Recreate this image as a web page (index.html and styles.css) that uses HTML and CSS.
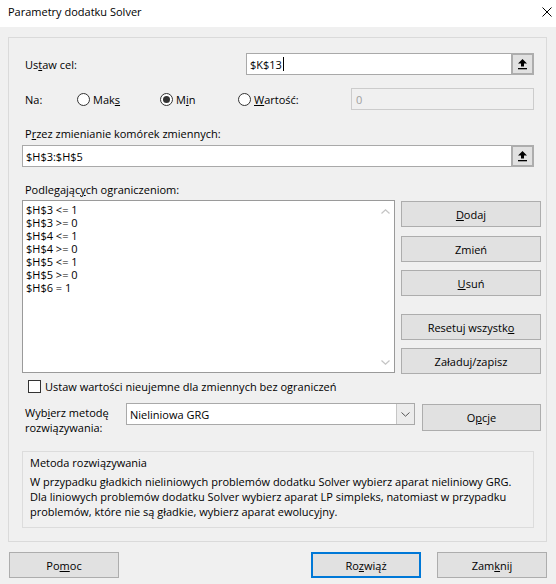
FILE: index.html
```html
<!DOCTYPE html>
<html lang="pl">
<head>
<meta charset="utf-8">
<title>Parametry dodatku Solver</title>
<link rel="stylesheet" href="styles.css">
</head>
<body>
<div class="titlebar">
  <span class="title">Parametry dodatku Solver</span>
  <svg class="close" viewBox="0 0 10 10" width="10" height="10"><path d="M0.5 0.5 L9.5 9.5 M9.5 0.5 L0.5 9.5" stroke="#000" stroke-width="1" fill="none"/></svg>
</div>
<div class="client">
  <div class="panel">
    <div class="row row-target">
      <span class="lbl">Us<u>t</u>aw cel:</span>
      <div class="input target">
        <span class="val">$K$13</span><span class="caret"></span>
        <span class="rbtn"><svg viewBox="0 0 11 12" width="11" height="12"><path d="M5.5 1 L10 5.5 L7 5.5 L7 8.5 L4 8.5 L4 5.5 L1 5.5 Z" fill="#000"/><rect x="1" y="10" width="9" height="1.3" fill="#000"/></svg></span>
      </div>
    </div>
    <div class="row row-to">
      <span class="lbl na">Na:</span>
      <span class="radio r1"><span class="circle"></span>Mak<u>s</u></span>
      <span class="radio r2"><span class="circle on"></span>M<u>i</u>n</span>
      <span class="radio r3"><span class="circle"></span><u>W</u>artość:</span>
      <div class="input value">0</div>
    </div>
    <div class="lbl sect">P<u>r</u>zez zmienianie komórek zmiennych:</div>
    <div class="input changing">
      <span class="val">$H$3:$H$5</span>
      <span class="rbtn"><svg viewBox="0 0 11 12" width="11" height="12"><path d="M5.5 1 L10 5.5 L7 5.5 L7 8.5 L4 8.5 L4 5.5 L1 5.5 Z" fill="#000"/><rect x="1" y="10" width="9" height="1.3" fill="#000"/></svg></span>
    </div>
    <div class="lbl sect2">Podlegając<u>y</u>ch ograniczeniom:</div>
    <div class="constraints">
      <div class="listbox">
        <div class="items">
          <div>$H$3 &lt;= 1</div>
          <div>$H$3 &gt;= 0</div>
          <div>$H$4 &lt;= 1</div>
          <div>$H$4 &gt;= 0</div>
          <div>$H$5 &lt;= 1</div>
          <div>$H$5 &gt;= 0</div>
          <div>$H$6 = 1</div>
        </div>
        <div class="scroll">
          <svg viewBox="0 0 9 5" width="9" height="5"><path d="M0.5 4.5 L4.5 0.8 L8.5 4.5" stroke="#c4c4c4" stroke-width="1.2" fill="none"/></svg>
          <svg viewBox="0 0 9 5" width="9" height="5"><path d="M0.5 0.5 L4.5 4.2 L8.5 0.5" stroke="#c4c4c4" stroke-width="1.2" fill="none"/></svg>
        </div>
      </div>
      <div class="btncol">
        <div class="btn b-add"><span><u>D</u>odaj</span></div>
        <div class="btn b-chg"><span>Zmień</span></div>
        <div class="btn b-del"><span><u>U</u>suń</span></div>
        <div class="btn b-reset"><span>Resetuj wszystk<u>o</u></span></div>
        <div class="btn b-load"><span>Załaduj/zapisz</span></div>
      </div>
    </div>
    <div class="check"><span class="box"></span><span>Ustaw wartości nieujemne dla zmiennych bez o<u>g</u>raniczeń</span></div>
    <div class="method-row">
      <span class="lbl mlabel">Wyb<u>i</u>erz metodę rozwiązywania:</span>
      <div class="select">
        <span class="sel-text">Nieliniowa GRG</span>
        <span class="sel-arrow"><svg viewBox="0 0 9 5" width="9" height="5"><path d="M0.5 0.5 L4.5 4.2 L8.5 0.5" stroke="#555" stroke-width="1" fill="none"/></svg></span>
      </div>
      <div class="btn b-opt"><span>O<u>p</u>cje</span></div>
    </div>
    <div class="group">
      <div class="gtitle">Metoda rozwiązywania</div>
      <p class="gtext">W przypadku gładkich nieliniowych problemów dodatku Solver wybierz aparat nieliniowy GRG. Dla liniowych problemów dodatku Solver wybierz aparat LP simpleks, natomiast w przypadku problemów, które nie są gładkie, wybierz aparat ewolucyjny.</p>
    </div>
  </div>
  <div class="footer">
    <div class="btn f-help"><span>Po<u>m</u>oc</span></div>
    <div class="btn f-solve"><span>Ro<u>z</u>wiąż</span></div>
    <div class="btn f-close"><span>Zam<u>k</u>nij</span></div>
  </div>
</div>
</body>
</html>
```

FILE: styles.css
```css
* { box-sizing: border-box; margin: 0; padding: 0; }
html, body { width: 556px; height: 584px; overflow: hidden; }
body {
  background: #f0f0f0;
  font-family: "Open Sans", "Noto Sans", sans-serif;
  font-size: 11px;
  line-height: 15px;
  color: #000;
}
u { text-decoration: underline; text-underline-offset: 1px; }

.titlebar {
  height: 27px;
  background: #fff;
  display: flex;
  justify-content: space-between;
  align-items: flex-start;
  padding: 4px 0 0 8px;
  font-size: 11px;
  line-height: 16px;
}
.close { margin: 3px 4px 0 0; }

.client { padding: 10px 0 0 8px; }
.panel {
  width: 539px;
  height: 505px;
  border: 1px solid #dadada;
  padding: 0 5px 0 13px;
  display: flex;
  flex-direction: column;
}
.lbl { margin-left: 3px; }

.row { display: flex; align-items: center; height: 22px; padding-right: 7px; }
.row-target { margin-top: 15px; }
.row-to { margin-top: 13px; }

.input {
  height: 22px;
  border: 1px solid #a9a9a9;
  background: #fff;
  display: flex;
  align-items: center;
  padding-left: 3px;
}
.target { width: 288px; margin-left: auto; }
.caret { width: 1px; height: 14px; background: #000; margin-left: 1px; }
.rbtn {
  margin-left: auto;
  width: 23px;
  height: 22px;
  margin-right: -1px;
  background: #e1e1e1;
  border: 2px solid #adadad;
  display: flex;
  align-items: center;
  justify-content: center;
}

.na { width: 52px; }
.radio { display: flex; align-items: center; }
.r1 { width: 83px; }
.r2 { width: 78px; }
.circle {
  width: 13px;
  height: 13px;
  border: 1px solid #333;
  border-radius: 50%;
  background: #fff;
  margin-right: 3px;
  display: flex;
  align-items: center;
  justify-content: center;
}
.circle.on::after {
  content: "";
  width: 7px;
  height: 7px;
  border-radius: 50%;
  background: #333;
}
.value {
  width: 183px;
  margin-left: auto;
  background: #f0f0f0;
  border-color: #cccccc;
  color: #a0a0a0;
  padding-left: 4px;
}

.sect { margin-top: 16px; }
.changing { margin-top: 4px; margin-right: 7px; }
.sect2 { margin-top: 15px; }

.constraints { display: flex; gap: 6px; margin-top: 3px; }
.listbox {
  width: 373px;
  height: 173px;
  border: 1px solid #9a9a9a;
  background: #fff;
  display: flex;
}
.items { flex: 1; padding: 2px 0 0 3px; line-height: 13px; }
.scroll {
  width: 17px;
  display: flex;
  flex-direction: column;
  justify-content: space-between;
  align-items: center;
  padding: 8px 0 7px;
}

.btncol { width: 140px; display: flex; flex-direction: column; }
.btn {
  height: 26px;
  background: #e1e1e1;
  border: 1px solid #adadad;
  display: flex;
  align-items: center;
  justify-content: center;
}
.b-add { margin-top: 1px; }
.b-chg { margin-top: 9px; }
.b-del { margin-top: 8px; }
.b-reset { margin-top: 18px; }
.b-load { margin-top: 8px; }

.check { display: flex; align-items: center; height: 13px; margin: 6px 0 0 6px; }
.box {
  width: 13px;
  height: 13px;
  border: 1px solid #333;
  background: #fff;
  margin-right: 4px;
}

.method-row { display: flex; align-items: flex-start; height: 28px; margin-top: 10px; }
.mlabel { width: 101px; padding-top: 2px; }
.select {
  width: 289px;
  height: 22px;
  border: 1px solid #a9a9a9;
  background: #fff;
  display: flex;
  align-items: stretch;
}
.sel-text { flex: 1; padding-left: 3px; display: flex; align-items: center; }
.sel-arrow {
  width: 18px;
  background: #ececec;
  border-left: 1px solid #c6c6c6;
  display: flex;
  align-items: center;
  justify-content: center;
}
.b-opt { width: 119px; height: 27px; margin: 1px 0 0 7px; }

.group {
  margin: 20px 7px 0 0;
  height: 77px;
  border: 1px solid #dcdcdc;
  padding: 3px 8px 0 7px;
}
.gtext { margin-top: 4px; }

.footer { display: flex; margin-top: 10px; }
.footer .btn { width: 110px; }
.f-help { margin-left: 1px; }
.f-solve { margin-left: auto; border: 2px solid #0078d7; }
.f-close { margin: 0 9px 0 16px; }
```
